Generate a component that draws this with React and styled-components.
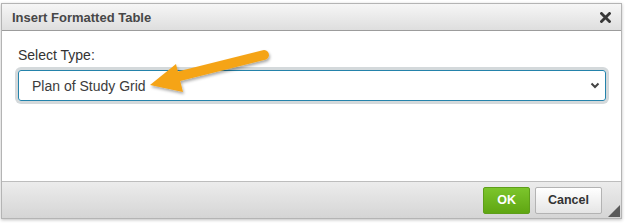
import React from "react";
import styled, { createGlobalStyle } from "styled-components";

const GlobalStyle = createGlobalStyle`
  html, body { margin: 0; padding: 0; background: #ffffff; }
  body { font-family: "Liberation Sans", Arial, sans-serif; }
`;

const Page = styled.div`
  position: relative;
  width: 625px;
  height: 223px;
  overflow: hidden;
  padding-top: 3px;
  padding-left: 1px;
  box-sizing: border-box;
`;

const Dialog = styled.div`
  position: relative;
  width: 621px;
  box-sizing: border-box;
  border: 1px solid #b4b4b4;
  background: #fff;
  box-shadow: 0 1px 3px rgba(0, 0, 0, 0.25);
  display: flex;
  flex-direction: column;
`;

const TitleBar = styled.div`
  height: 26px;
  border-bottom: 1px solid #9c9c9c;
  background: linear-gradient(#f6f6f6, #dedede);
  display: flex;
  align-items: center;
  justify-content: space-between;
  padding: 0 10px 0 10px;
`;

const Title = styled.span`
  font-size: 13px;
  font-weight: bold;
  color: #474747;
`;

const CloseIcon = styled.svg`
  width: 11px;
  height: 11px;
  display: block;
`;

const Content = styled.div`
  height: 150px;
  box-sizing: border-box;
  padding: 16px 15px 0 16px;
`;

const Label = styled.div`
  font-size: 14px;
  line-height: 16px;
  color: #333;
  margin-bottom: 7px;
`;

const SelectBox = styled.div`
  height: 31px;
  box-sizing: border-box;
  border: 1px solid #2483ab;
  border-radius: 3px;
  box-shadow: 0 0 0 3px #d4d9db;
  display: flex;
  align-items: center;
  justify-content: space-between;
  padding: 0 5px 0 13px;
  font-size: 14px;
  color: #3c3c3c;
`;

const Chevron = styled.svg`
  width: 10px;
  height: 7px;
  display: block;
`;

const Footer = styled.div`
  height: 36px;
  border-top: 1px solid #bdbdbd;
  background: linear-gradient(#ececec, #d5d5d5);
  display: flex;
  align-items: center;
  justify-content: flex-end;
  gap: 5px;
  padding-right: 19px;
`;

const Button = styled.div`
  height: 27px;
  box-sizing: border-box;
  padding: 0 ${(p) => (p.$primary ? "13px" : "12px")};
  border-radius: 2px;
  display: flex;
  align-items: center;
  justify-content: center;
  font-size: 12.5px;
  font-weight: bold;
  border: 1px solid ${(p) => (p.$primary ? "#5e9e1a" : "#b3b3b3")};
  background: ${(p) =>
    p.$primary
      ? "linear-gradient(#7cc52c, #5fa612)"
      : "linear-gradient(#ffffff, #e5e5e5)"};
  color: ${(p) => (p.$primary ? "#ffffff" : "#333333")};
  min-width: ${(p) => (p.$primary ? "43px" : "65px")};
`;

const Grip = styled.svg`
  position: absolute;
  right: 1px;
  bottom: 1px;
  width: 12px;
  height: 12px;
`;

const ArrowOverlay = styled.svg`
  position: absolute;
  left: 0;
  top: 0;
  width: 625px;
  height: 223px;
  pointer-events: none;
`;

export default function App() {
  return (
    <>
      <GlobalStyle />
      <Page>
        <Dialog>
          <TitleBar>
            <Title>Insert Formatted Table</Title>
            <CloseIcon viewBox="0 0 11 11">
              <path
                d="M1.5 1.5 L9.5 9.5 M9.5 1.5 L1.5 9.5"
                stroke="#383838"
                strokeWidth="2.8"
                strokeLinecap="square"
              />
            </CloseIcon>
          </TitleBar>
          <Content>
            <Label>Select Type:</Label>
            <SelectBox>
              <span>Plan of Study Grid</span>
              <Chevron viewBox="0 0 10 7">
                <path
                  d="M1.5 1.5 L5 5 L8.5 1.5"
                  fill="none"
                  stroke="#444"
                  strokeWidth="2"
                />
              </Chevron>
            </SelectBox>
          </Content>
          <Footer>
            <Button $primary>OK</Button>
            <Button>Cancel</Button>
          </Footer>
          <Grip viewBox="0 0 12 12">
            <polygon points="12,0 12,12 0,12" fill="#5a5a5a" />
          </Grip>
        </Dialog>
        <ArrowOverlay viewBox="0 0 625 223">
          <defs>
            <filter id="sh" x="-20%" y="-50%" width="140%" height="200%">
              <feDropShadow dx="1" dy="2" stdDeviation="1.5" floodColor="#000" floodOpacity="0.35" />
            </filter>
          </defs>
          <g filter="url(#sh)" fill="#f5a418">
            <line x1="264" y1="55" x2="176" y2="77" stroke="#f5a418" strokeWidth="10" strokeLinecap="round" />
            <polygon points="150,85 176,64 183,92" />
          </g>
        </ArrowOverlay>
      </Page>
    </>
  );
}
